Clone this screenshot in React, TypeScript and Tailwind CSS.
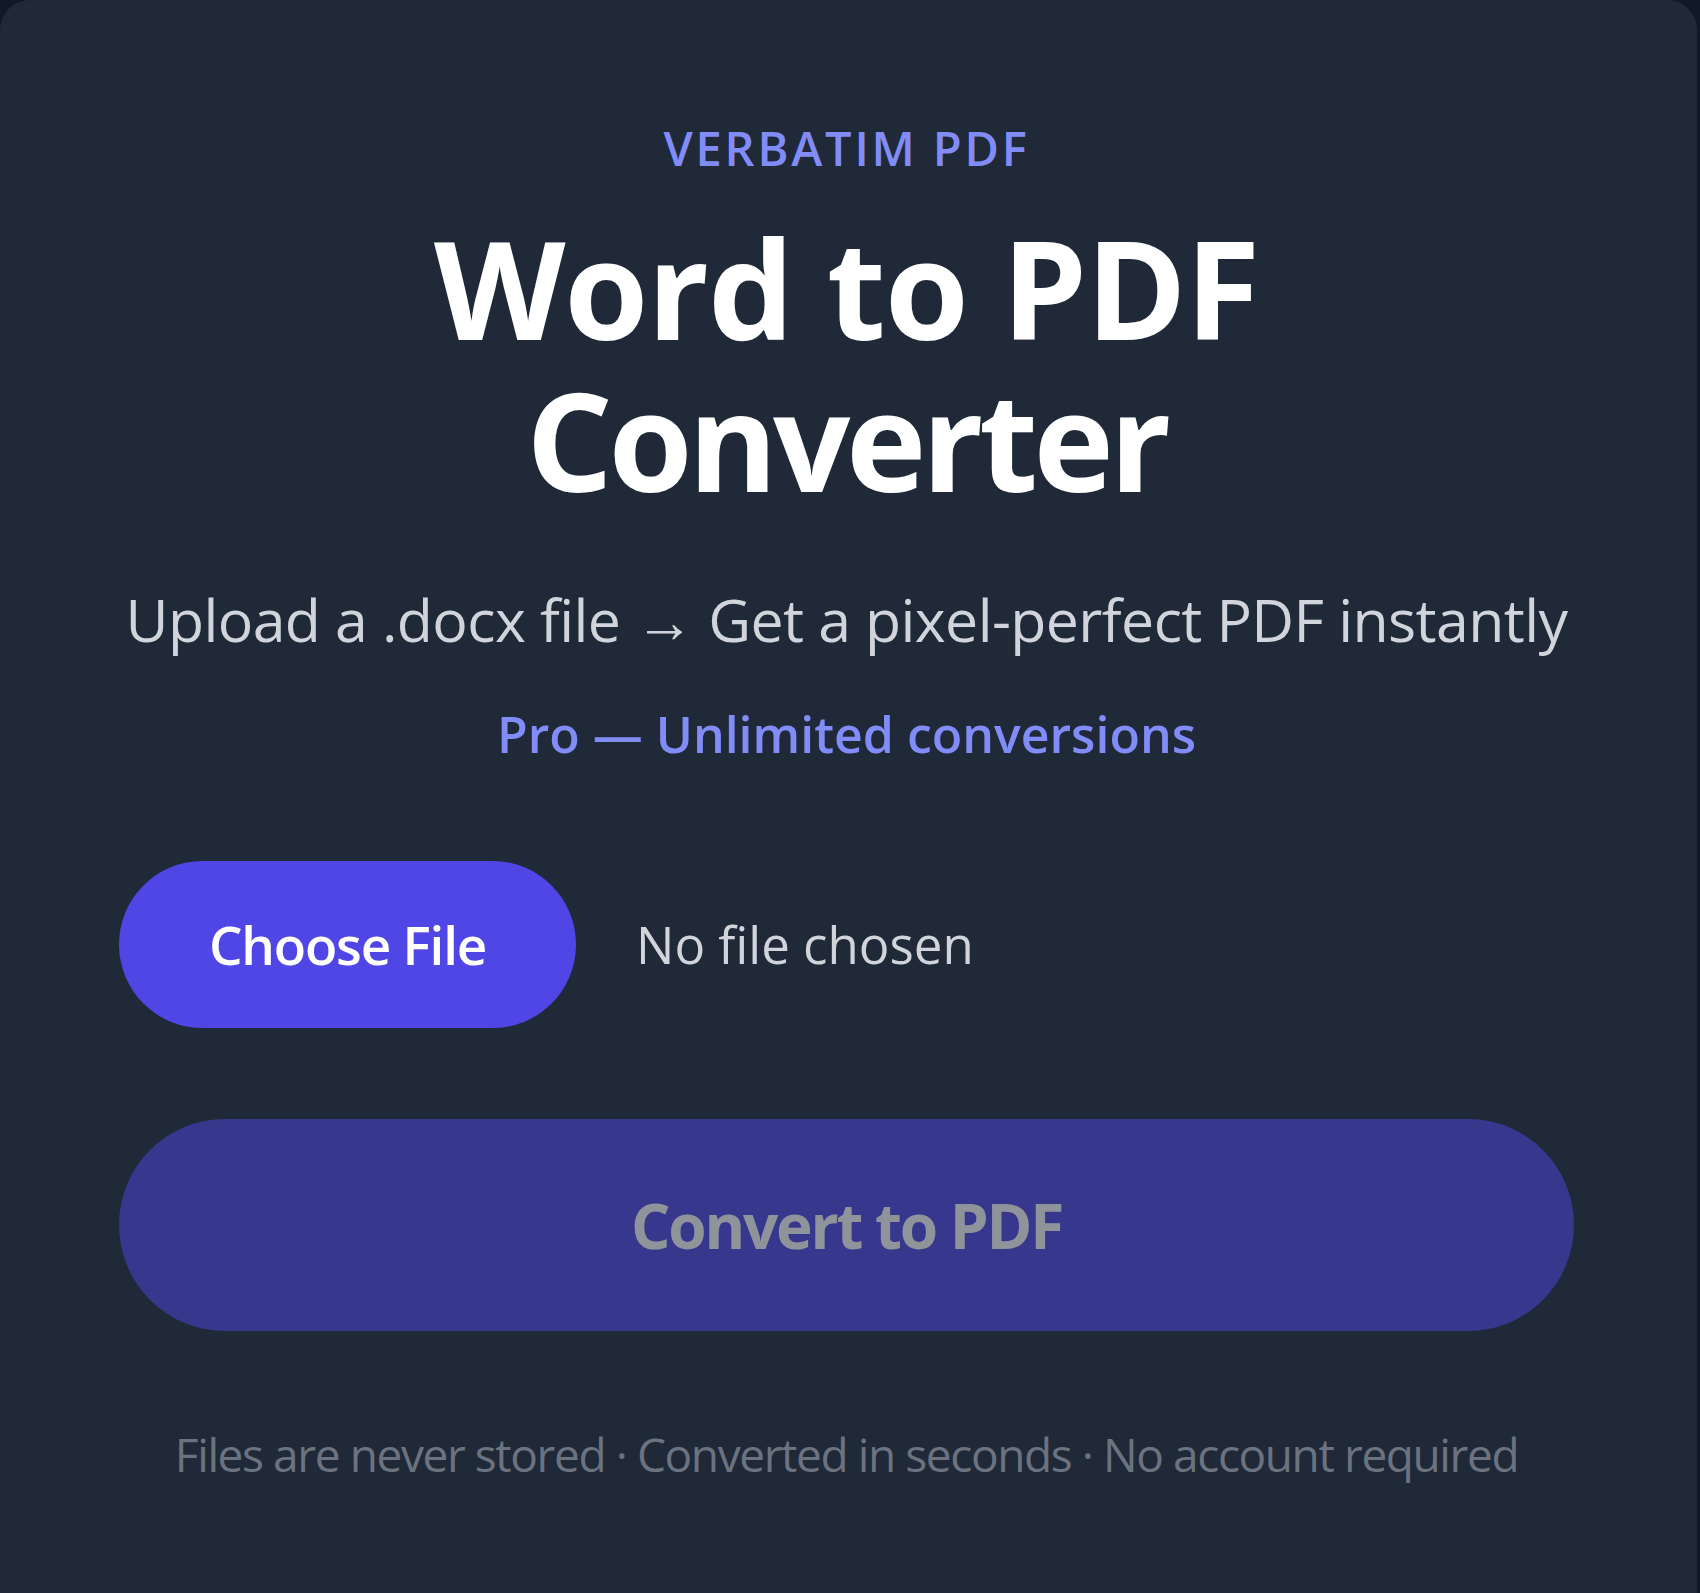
import React from "react";

export default function App() {
  return (
    <div className="min-h-[1593px] w-full overflow-hidden bg-[#111827]" style={{ fontFamily: '"Open Sans", "Noto Sans", sans-serif' }}>
      <div className="flex w-[1697px] flex-col items-center rounded-[30px] bg-[#1f2937] pb-[200px] pl-[119px] pr-[123px] pt-[125px]">
        <div className="text-[47px] font-semibold uppercase leading-[47px] tracking-[0.06em] text-[#818cf8]">
          Verbatim PDF
        </div>
        <h1 className="mt-[40px] flex flex-col items-center text-center text-[136px] font-bold leading-[152px] text-white">
          <span className="block whitespace-nowrap tracking-[-1.2px]">Word to PDF</span>
          <span className="block whitespace-nowrap tracking-[-4.5px]">Converter</span>
        </h1>
        <p className="mt-[65px] whitespace-nowrap text-center text-[59px] leading-[77px] tracking-[-0.6px] text-[#d1d5db]">
          Upload a .docx file → Get a pixel-perfect PDF instantly
        </p>
        <p className="mt-[45px] whitespace-nowrap text-center text-[50px] font-semibold leading-[62px] text-[#818cf8]">
          Pro — Unlimited conversions
        </p>
        <div className="mt-[96px] flex w-full items-center gap-[60px]">
          <button className="flex h-[167px] w-[457px] items-center justify-center rounded-full bg-[#4f46e5] text-[53px] font-semibold tracking-[-1.2px] text-white">
            Choose File
          </button>
          <span className="text-[51px] text-[#d1d5db]">No file chosen</span>
        </div>
        <button
          disabled
          className="mt-[91px] flex h-[212px] w-full items-center justify-center rounded-full bg-[#4f46e5] text-[62px] font-bold tracking-[-2.2px] text-white opacity-50"
        >
          Convert to PDF
        </button>
        <p className="mt-[93px] whitespace-nowrap text-center text-[46px] leading-[60px] tracking-[-1.4px] text-[#6b7280]">
          Files are never stored · Converted in seconds · No account required
        </p>
      </div>
    </div>
  );
}
